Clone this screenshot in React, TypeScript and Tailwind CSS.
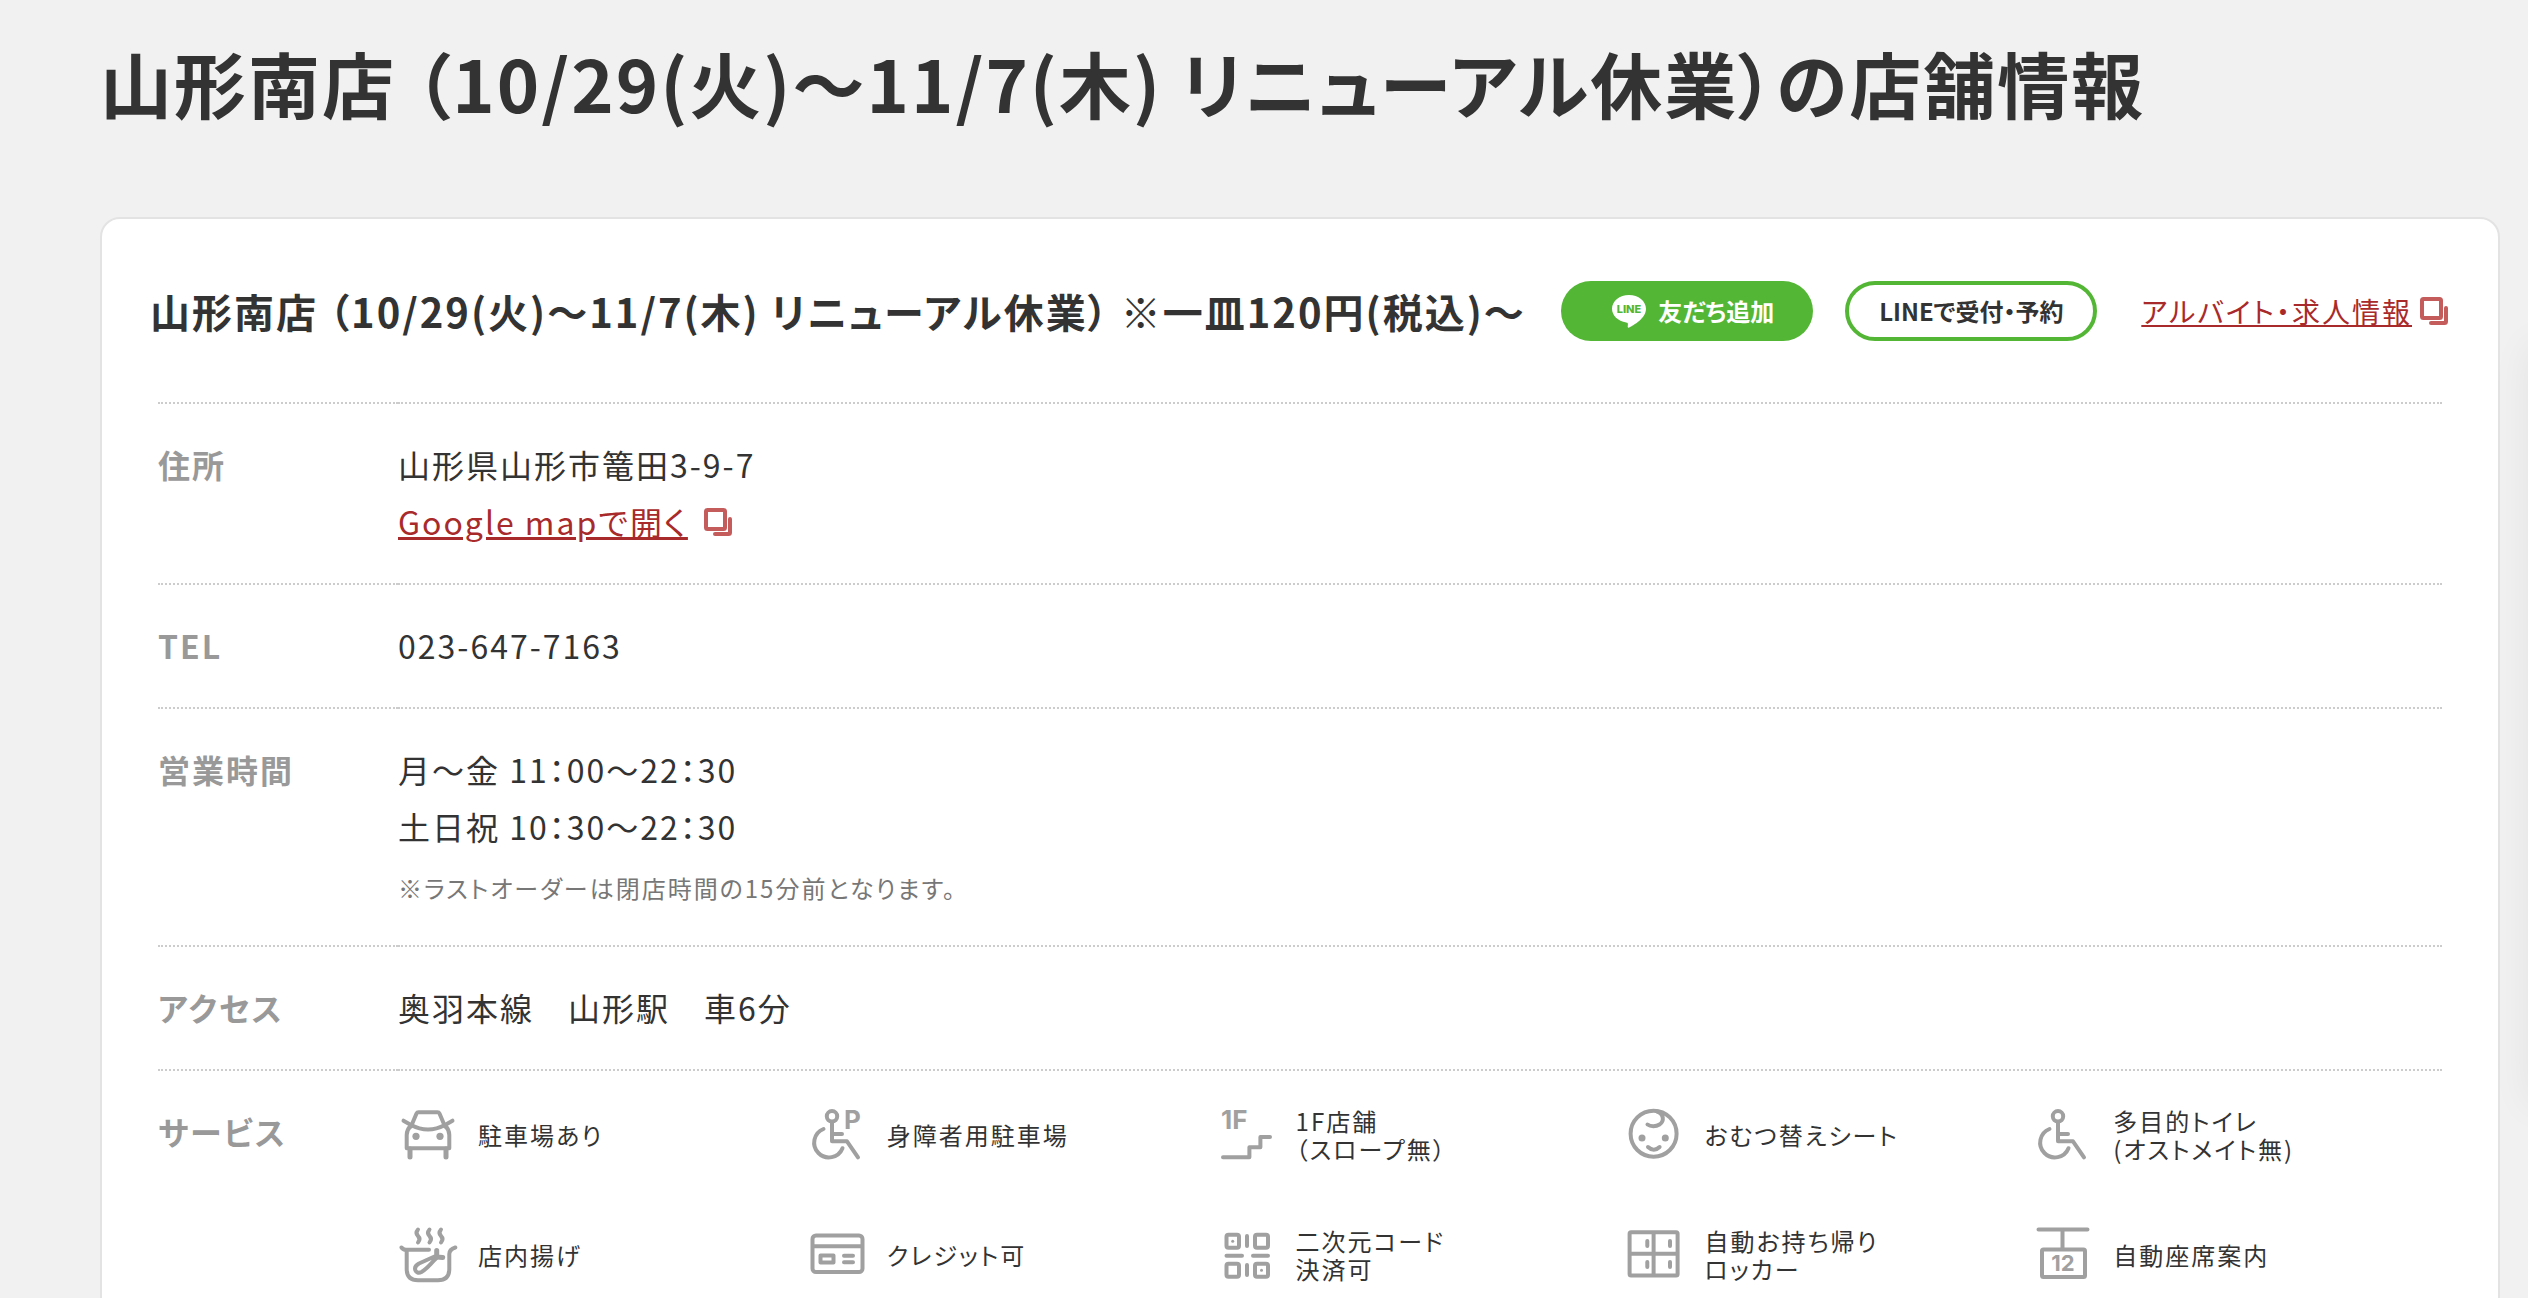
import React from 'react';

type IconProps = {
  children: React.ReactNode;
};

const Icon: React.FC<IconProps> = ({ children }) => (
  <svg
    viewBox="0 0 60 60"
    className="h-[60px] w-[60px] shrink-0"
    fill="none"
    stroke="#a0a0a0"
    strokeWidth="4"
    strokeLinecap="round"
    strokeLinejoin="round"
    aria-hidden="true"
  >
    {children}
  </svg>
);

const ExternalIcon: React.FC = () => (
  <svg viewBox="0 0 28 28" className="h-7 w-7 shrink-0" fill="none" stroke="#c45c5c" strokeWidth="4" strokeLinejoin="round" strokeLinecap="round" aria-hidden="true">
    <rect x="2" y="2" width="19" height="19" rx="1.5" />
    <path d="M26 11v13.5q0 1.500-1.500 1.500H11" />
  </svg>
);

const LineIcon: React.FC = () => (
  <svg viewBox="0 0 34 33" className="h-[33px] w-[34px] shrink-0" aria-hidden="true">
    <path d="M17 0C7.6 0 0 6.2 0 13.8c0 6.800 6 12.500 14.200 13.600 2 .3 1.900 1.200 1.500 4.200-.1.900.6 1.400 1.500.9C21.500 30.300 34 23.500 34 13.800 34 6.200 26.400 0 17 0Z" fill="#fff" />
    <text x="17" y="18" textAnchor="middle" className="font-['Inter'] text-[11px] font-extrabold tracking-normal" fill="#53b635">LINE</text>
  </svg>
);

const Wheelchair: React.FC = () => (
  <>
    <circle cx="25" cy="11.300" r="5.200" />
    <path d="M25 17v19.300h15l11 16M25 29h10" />
    <path d="M16.500 24A14.700 14.700 0 1 0 35.500 43.200" />
  </>
);

const iconText = "font-['Inter'] font-bold tracking-normal";

const services = [
  {
    label: ['駐車場あり'],
    icon: (
      <>
        <path d="M13 21.500 18.500 8.500q.6-1.300 2-1.300h19q1.400 0 2 1.300L47 21.500" />
        <path d="M5.500 15.700 13 20q17 9 34 0l7.500-4.300" />
        <path d="M12.500 21q-3.800 4-3.800 9v13.200h42.600V30q0-5-3.800-9" />
        <path d="M12 44v8M48 44v8" strokeWidth="5" />
        <circle cx="18" cy="31.300" r="3.600" fill="#a0a0a0" stroke="none" />
        <circle cx="42" cy="31.300" r="3.600" fill="#a0a0a0" stroke="none" />
      </>
    ),
  },
  {
    label: ['身障者用駐車場'],
    icon: (
      <>
        <Wheelchair />
        <text x="37" y="24" fill="#a0a0a0" stroke="none" className={`${iconText} text-[26px]`}>P</text>
      </>
    ),
  },
  {
    label: ['1F店舗', '（スロープ無）'],
    icon: (
      <>
        <text x="5" y="24" fill="#a0a0a0" stroke="none" className={`${iconText} text-[26px]`}>1F</text>
        <path d="M7 52.300h26.400v-10h11V32H54" />
      </>
    ),
  },
  {
    label: ['おむつ替えシート'],
    icon: (
      <>
        <circle cx="29.600" cy="28.700" r="23" />
        <path d="M33 6.500c7 2 7.500 10 2.500 13-3.500 2.200-9 2.200-12 0M24 42q5.800 5.500 11.600 0" />
        <circle cx="18" cy="33" r="3.500" fill="#a0a0a0" stroke="none" />
        <circle cx="41.300" cy="33" r="3.500" fill="#a0a0a0" stroke="none" />
      </>
    ),
  },
  {
    label: ['多目的トイレ', '(オストメイト無)'],
    icon: <Wheelchair />,
  },
  {
    label: ['店内揚げ'],
    icon: (
      <>
        <path d="M3.500 22.500q1.500 2.200 4.500 2.200h23M8.700 25v19q0 11.300 11.300 11.300h20q11.300 0 11.300-11.300V29q0-4.500 6-6.500" />
        <path d="M20 4.500q-3 3.500 0 6.500t0 6.500M31.500 4.500q-3 3.500 0 6.500t0 6.500M43 4.500q-3 3.500 0 6.500t0 6.500" />
        <path d="M36.500 31.500 21 38.500c-7 4-3.500 11.500 2.500 8.500 6-3.500 9-8.500 15-14" />
        <path d="M38.700 25.500v6.500l6 .5" strokeWidth="5" />
      </>
    ),
  },
  {
    label: ['クレジット可'],
    icon: (
      <>
        <rect x="5.500" y="10.500" width="50" height="36.500" rx="3.500" />
        <path d="M6 21.300h49M37 30.700h9M37 37.300h9" />
        <rect x="13.500" y="30.500" width="13" height="7" />
      </>
    ),
  },
  {
    label: ['二次元コード', '決済可'],
    icon: (
      <>
        <rect x="10.500" y="9.700" width="12.500" height="13" rx="2" />
        <rect x="39" y="9.700" width="13" height="13" rx="2" />
        <rect x="10.500" y="38.700" width="12.500" height="13" rx="2" />
        <rect x="39" y="38.700" width="13" height="13" rx="2" />
        <path d="M31 11v10M31 40v10M10.500 30.700H26M37 30.700h15" />
        <circle cx="16.700" cy="16.300" r="1.500" fill="#a0a0a0" stroke="none" />
        <circle cx="45.500" cy="45.300" r="1.500" fill="#a0a0a0" stroke="none" />
      </>
    ),
  },
  {
    label: ['自動お持ち帰り', 'ロッカー'],
    icon: (
      <>
        <rect x="5.600" y="7.300" width="48" height="43.200" rx="1.500" />
        <path d="M29.600 8v42M6 28.700h47M23.300 16v5M46 16v5M23.300 37v5M46 37v5" />
      </>
    ),
  },
  {
    label: ['自動座席案内'],
    icon: (
      <>
        <path d="M5.500 4.500h49M29.500 5v19" />
        <rect x="9" y="24.500" width="43" height="27.500" rx="1.500" />
        <text x="30" y="46" textAnchor="middle" fill="#a0a0a0" stroke="none" className={`${iconText} text-[22px]`}>12</text>
      </>
    ),
  },
];

type RowProps = {
  title: string;
  children: React.ReactNode;
};

const Row: React.FC<RowProps> = ({ title, children }) => (
  <tr className="border-t-2 border-dotted border-[#ccc] align-top">
    <th scope="row" className="w-60 pt-8 pb-[33px] text-left font-bold text-[#999]">{title}</th>
    <td className="pt-8 pb-[33px]">{children}</td>
  </tr>
);

const linkStyle = 'text-[#a92a2a] underline';

const App: React.FC = () => {
  return (
    <div
      lang="ja"
      className="relative min-h-screen overflow-hidden bg-[#f1f1f1] pt-11 pr-7 pl-[100px] font-['Noto_Sans_CJK_JP','Noto_Sans',sans-serif] tracking-[2px] text-[#333] [font-feature-settings:'palt']"
    >
      <h1 className="text-[72px] leading-[76px] font-bold">
        山形南店 （10/29(火)～11/7(木) リニューアル休業）の店舗情報
      </h1>
      <main className="mt-[97px] rounded-[20px] border-2 border-[#e3e3e3] bg-white pt-[62px] pr-[50px] pb-12 pl-12">
        <div className="flex items-center whitespace-nowrap">
          <h2 className="text-[40px] leading-[60px] font-bold">
            山形南店 （10/29(火)～11/7(木) リニューアル休業） ※一皿120円(税込)～
          </h2>
          <div className="ml-auto flex items-center gap-8 text-2xl font-bold tracking-normal">
            <button type="button" className="flex h-[60px] w-[252px] items-center justify-center gap-3 rounded-full bg-[#53b635] pl-3 text-white">
              <LineIcon />
              友だち追加
            </button>
            <button type="button" className="h-[60px] w-[252px] rounded-full border-4 border-[#53b635] bg-white">
              LINEで受付・予約
            </button>
          </div>
          <div className="ml-11 flex items-center gap-2 text-[28px]">
            <a href="#" className={linkStyle}>アルバイト・求人情報</a>
            <ExternalIcon />
          </div>
        </div>
        <div className="mt-[61px] pr-1.5 pl-2">
          <table className="w-full border-collapse text-[32px] leading-[57px]">
            <tbody>
              <Row title="住所">
                <p>山形県山形市篭田3-9-7</p>
                <p className="flex items-center gap-4">
                  <a href="#" className={linkStyle}>Google mapで開く</a>
                  <ExternalIcon />
                </p>
              </Row>
              <Row title="TEL">023-647-7163</Row>
              <Row title="営業時間">
                <p>月～金 11：00～22：30</p>
                <p>土日祝 10：30～22：30</p>
                <p className="mt-2 text-2xl leading-[49px] text-[#777]">※ラストオーダーは閉店時間の15分前となります。</p>
              </Row>
              <Row title="アクセス">奥羽本線　山形駅　車6分</Row>
              <Row title="サービス">
                <ul className="mt-0.5 grid grid-cols-5 gap-y-[60px] text-2xl leading-7">
                  {services.map((service) => (
                    <li key={service.label[0]} className="flex items-center gap-5">
                      <Icon>{service.icon}</Icon>
                      <span>
                        {service.label.map((line) => (
                          <span key={line} className="block">{line}</span>
                        ))}
                      </span>
                    </li>
                  ))}
                </ul>
              </Row>
            </tbody>
          </table>
        </div>
      </main>
      {/* side menu, slid out past the right edge; only its shadow shows */}
      <div className="absolute top-[345px] left-full h-[760px] w-20 shadow-[0_0_40px_rgba(0,0,0,0.06)]" />
    </div>
  );
};

export default App;
